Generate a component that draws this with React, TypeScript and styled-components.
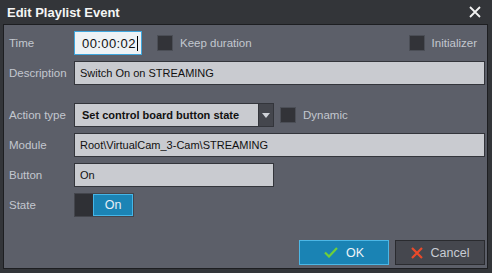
import styled, { createGlobalStyle } from 'styled-components'

const GlobalStyle = createGlobalStyle`
	html, body {
		margin: 0;
		padding: 0;
		background: #333539;
	}
	body {
		font-family: 'Liberation Sans', Arial, sans-serif;
		font-size: 11.5px;
	}
`

const Window = styled.div`
	width: 492px;
	height: 273px;
	display: flex;
	flex-direction: column;
	background: #333539;
	box-sizing: border-box;
`

const TitleBar = styled.div`
	height: 24px;
	flex-shrink: 0;
	display: flex;
	align-items: center;
	justify-content: space-between;
	padding: 0 11px 0 7px;
`

const Title = styled.h1`
	margin: 0;
	font-size: 13px;
	font-weight: 700;
	color: #f5f5f5;
`

const Body = styled.div`
	flex: 1;
	display: flex;
	flex-direction: column;
	margin: 0 4px 4px 3px;
	border: 1px solid #1d1e21;
	background: #5c5f69;
	padding: 6px 2px 3px 5px;
`

const Form = styled.div`
	display: grid;
	grid-template-columns: 65px 1fr;
	row-gap: 6px;
`

const Label = styled.span<{ $spaced?: boolean }>`
	height: 24px;
	display: flex;
	align-items: center;
	color: #c3c7cf;
	margin-top: ${({ $spaced }) => ($spaced ? '12px' : '0')};
`

const Row = styled.div<{ $spaced?: boolean }>`
	display: flex;
	align-items: center;
	height: 24px;
	margin-top: ${({ $spaced }) => ($spaced ? '12px' : '0')};
`

const TextBox = styled.div<{ $width?: number }>`
	box-sizing: border-box;
	height: 24px;
	width: ${({ $width }) => ($width ? `${$width}px` : '100%')};
	background: #c9cbd0;
	border: 1px solid #33353b;
	color: #111;
	font-size: 11px;
	display: flex;
	align-items: center;
	padding: 0 5px;
	white-space: nowrap;
	overflow: hidden;
`

const TimeBox = styled.div`
	box-sizing: border-box;
	width: 68px;
	height: 24px;
	background: #eef2f5;
	border: 1px solid #3fa6dd;
	display: flex;
	align-items: center;
	padding: 0 0 0 7px;
	font-size: 13px;
	letter-spacing: 0.4px;
	color: #111;
	margin-right: 15px;
`

const Caret = styled.span`
	display: inline-block;
	width: 1px;
	height: 15px;
	background: #000;
	margin-left: 1px;
`

const CheckWrap = styled.label<{ $push?: boolean }>`
	display: flex;
	align-items: center;
	gap: 7px;
	color: #c3c7cf;
	margin-left: ${({ $push }) => ($push ? 'auto' : '0')};
	margin-right: ${({ $push }) => ($push ? '8px' : '0')};
`

const Box = styled.span`
	box-sizing: border-box;
	width: 16px;
	height: 16px;
	background: #323338;
	border: 1px solid #4b4e56;
`

const Select = styled.div`
	box-sizing: border-box;
	width: 200px;
	height: 24px;
	display: flex;
	background: #c9cbd0;
	border: 1px solid #33353b;
	margin-right: 6px;
`

const SelectText = styled.span`
	flex: 1;
	display: flex;
	align-items: center;
	padding-left: 7px;
	font-size: 11px;
	font-weight: 700;
	color: #111;
	white-space: nowrap;
`

const DropButton = styled.span`
	width: 14px;
	background: #44464d;
	display: flex;
	align-items: center;
	justify-content: center;
	border-left: 1px solid #33353b;
`

const Toggle = styled.div`
	box-sizing: border-box;
	width: 60px;
	height: 24px;
	display: flex;
	border: 1px solid #43454c;
	background: #2f3035;
`

const ToggleOff = styled.span`
	width: 18px;
`

const ToggleOn = styled.span`
	flex: 1;
	display: flex;
	align-items: center;
	justify-content: center;
	background: #1b84b5;
	border: 1px solid #45b6e8;
	color: #e6eef5;
	font-size: 12.5px;
`

const Footer = styled.div`
	margin-top: auto;
	display: flex;
	justify-content: flex-end;
	gap: 6px;
`

const Button = styled.button<{ $primary?: boolean }>`
	box-sizing: border-box;
	width: 90px;
	height: 25px;
	display: flex;
	align-items: center;
	justify-content: center;
	gap: 8px;
	font-family: inherit;
	font-size: 12.5px;
	background: ${({ $primary }) => ($primary ? '#1a83b4' : '#45474e')};
	border: 1px solid ${({ $primary }) => ($primary ? '#4cb7e6' : '#2a2b2f')};
	color: ${({ $primary }) => ($primary ? '#eef4f8' : '#c8ccd4')};
	padding: 0;
`

const CloseIcon = () => (
	<svg width='12' height='12' viewBox='0 0 12 12'>
		<path d='M1 1L11 11M11 1L1 11' stroke='#f2f2f2' strokeWidth='1.8' />
	</svg>
)

const CheckIcon = () => (
	<svg width='14' height='11' viewBox='0 0 14 11'>
		<path d='M1 5.5L5 9.5L13 1' fill='none' stroke='#6fcf3a' strokeWidth='2.2' />
	</svg>
)

const CrossIcon = () => (
	<svg width='12' height='12' viewBox='0 0 12 12'>
		<path d='M1 1L11 11M11 1L1 11' stroke='#ea4a2a' strokeWidth='2.2' />
	</svg>
)

const Arrow = () => (
	<svg width='8' height='5' viewBox='0 0 8 5'>
		<path d='M0 0H8L4 5Z' fill='#cfd2d8' />
	</svg>
)

const App = () => {
	return (
		<>
			<GlobalStyle />
			<Window>
				<TitleBar>
					<Title>Edit Playlist Event</Title>
					<CloseIcon />
				</TitleBar>
				<Body>
					<Form>
						<Label>Time</Label>
						<Row>
							<TimeBox>
								00:00:02
								<Caret />
							</TimeBox>
							<CheckWrap>
								<Box />
								Keep duration
							</CheckWrap>
							<CheckWrap $push>
								<Box />
								Initializer
							</CheckWrap>
						</Row>

						<Label>Description</Label>
						<TextBox>Switch On on STREAMING</TextBox>

						<Label $spaced>Action type</Label>
						<Row $spaced>
							<Select>
								<SelectText>Set control board button state</SelectText>
								<DropButton>
									<Arrow />
								</DropButton>
							</Select>
							<CheckWrap>
								<Box />
								Dynamic
							</CheckWrap>
						</Row>

						<Label>Module</Label>
						<TextBox>Root\VirtualCam_3-Cam\STREAMING</TextBox>

						<Label>Button</Label>
						<TextBox $width={200}>On</TextBox>

						<Label>State</Label>
						<Row>
							<Toggle>
								<ToggleOff />
								<ToggleOn>On</ToggleOn>
							</Toggle>
						</Row>
					</Form>
					<Footer>
						<Button $primary>
							<CheckIcon />
							OK
						</Button>
						<Button>
							<CrossIcon />
							Cancel
						</Button>
					</Footer>
				</Body>
			</Window>
		</>
	)
}

export default App
